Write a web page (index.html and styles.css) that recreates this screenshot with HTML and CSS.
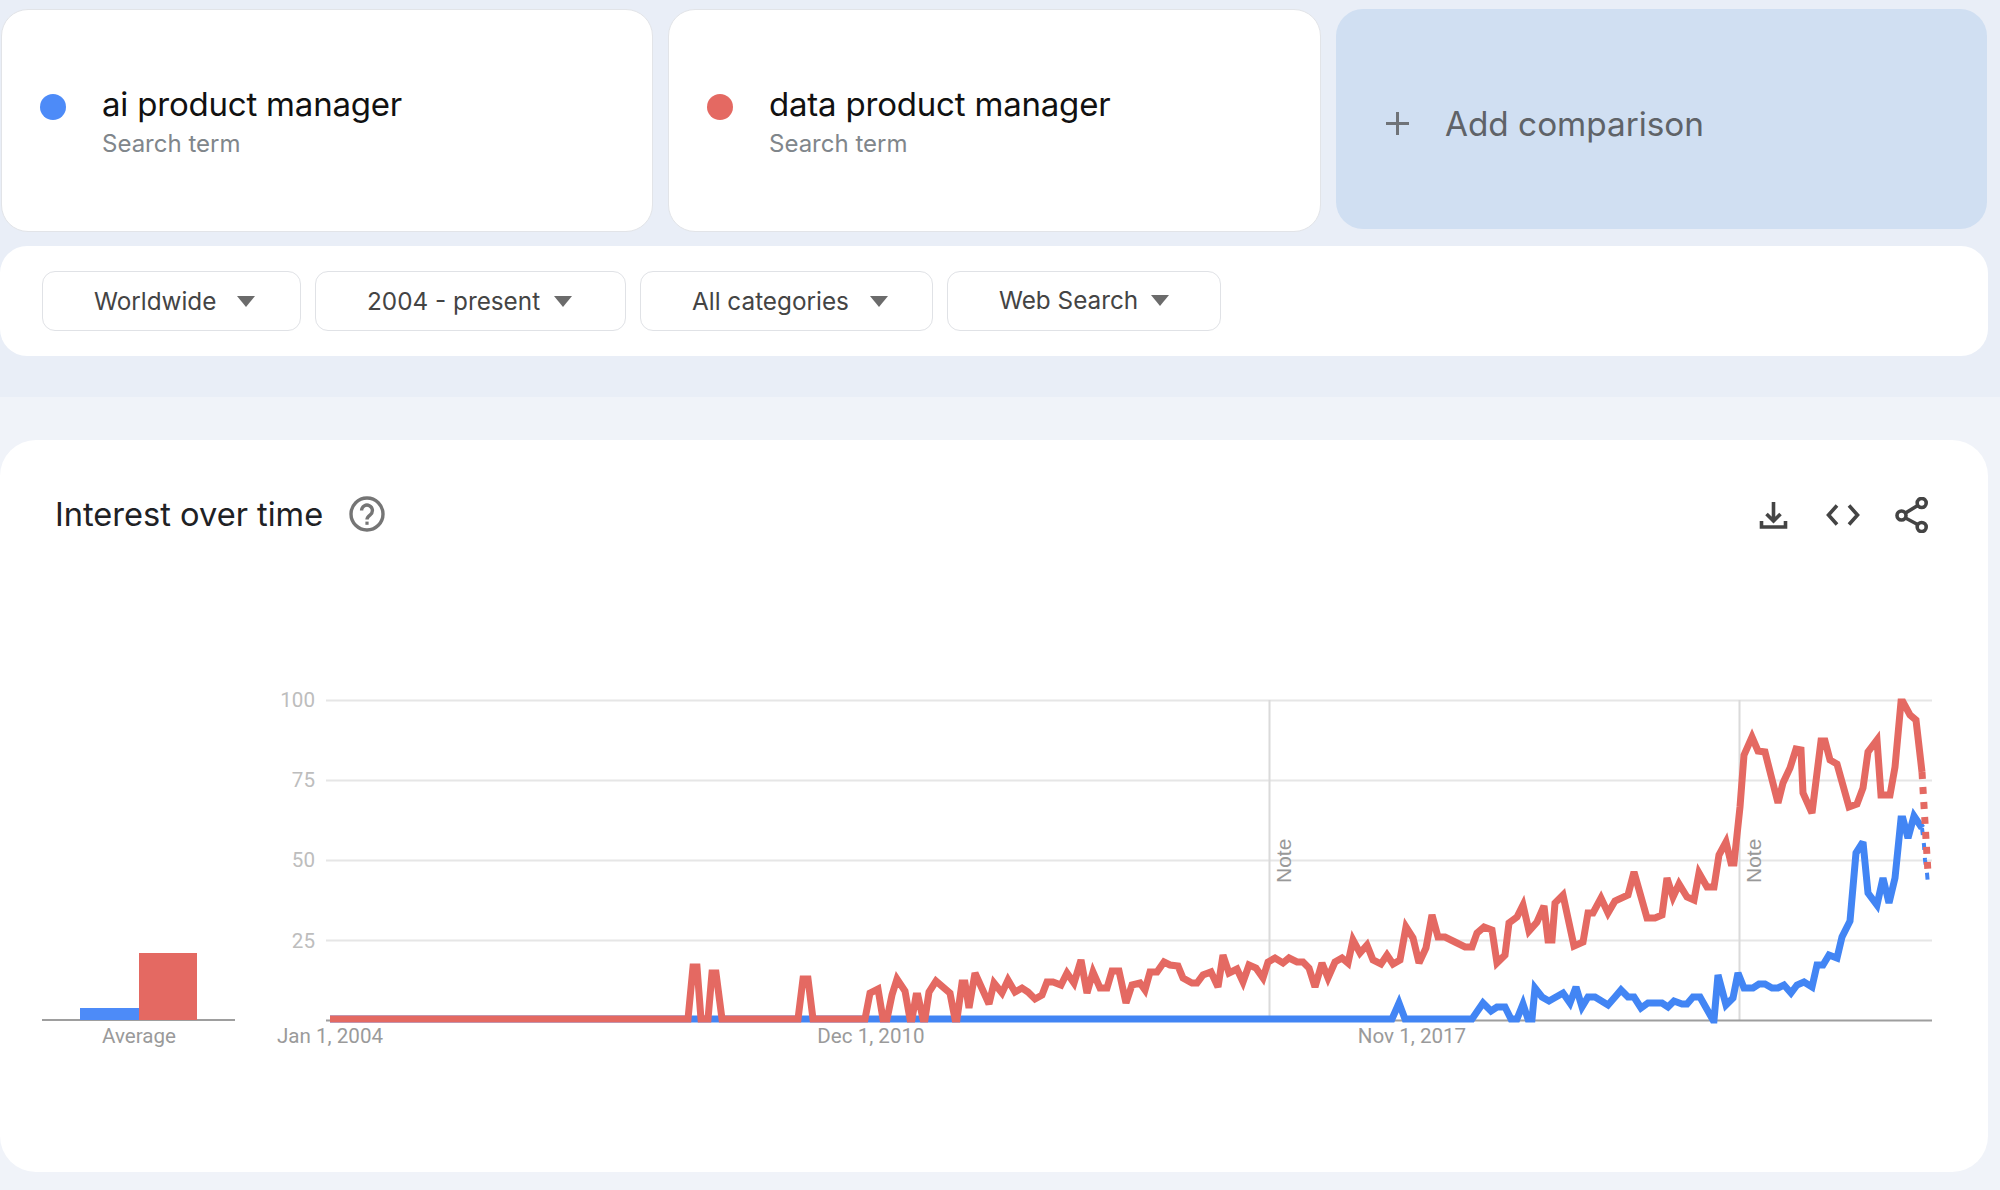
FILE: index.html
```html
<!DOCTYPE html>
<html lang="en">
<head>
<meta charset="utf-8">
<title>Google Trends - ai product manager vs data product manager</title>
<link rel="stylesheet" href="styles.css">
</head>
<body>
<header class="top">
  <div class="terms">
    <div class="term">
      <span class="dot dot-blue"></span>
      <div class="term-text">
        <div class="term-name">ai product manager</div>
        <div class="term-sub">Search term</div>
      </div>
    </div>
    <div class="term">
      <span class="dot dot-red"></span>
      <div class="term-text">
        <div class="term-name">data product manager</div>
        <div class="term-sub">Search term</div>
      </div>
    </div>
    <div class="add">
      <svg class="plus" viewBox="0 0 25 25" aria-hidden="true"><path d="M12.5 1v23M1 12.5h23"/></svg>
      <span class="add-label">Add comparison</span>
    </div>
  </div>
  <div class="filters">
    <div class="pill pill-geo"><span>Worldwide</span><i class="caret"></i></div>
    <div class="pill pill-time"><span>2004 - present</span><i class="caret"></i></div>
    <div class="pill pill-cat"><span>All categories</span><i class="caret"></i></div>
    <div class="pill pill-web"><span>Web Search</span><i class="caret"></i></div>
  </div>
</header>
<main class="main">
  <section class="card">
    <div class="card-head">
      <h2 class="card-title">Interest over time</h2>
      <svg class="help" viewBox="0 0 36 36" aria-hidden="true">
        <circle cx="18" cy="18" r="16"/>
        <path d="M12.6 14.4a5.4 5.4 0 1 1 8.6 4.4c-2 1.5-3.200 2.400-3.200 4.600"/>
        <path class="help-dot" d="M16.400 25.600h3.200v3.200h-3.200z"/>
      </svg>
      <div class="actions">
        <svg class="act" viewBox="0 0 36 36" aria-hidden="true"><path d="M18.500 5v19M11.500 17l7 7 7-7M6.500 24v6h24v-6"/></svg>
        <svg class="act" viewBox="0 0 36 36" aria-hidden="true"><path d="M12 8.500 3.500 18l8.500 9.500M24 8.500l8.500 9.500-8.500 9.500"/></svg>
        <svg class="act" viewBox="0 0 36 36" aria-hidden="true"><circle cx="6.500" cy="18.500" r="4.500"/><circle cx="26.700" cy="6" r="4.500"/><circle cx="26.700" cy="30" r="4.500"/><path d="M10.500 16 22.700 8.500M10.500 21l12.200 6.500"/></svg>
      </div>
    </div>
    <svg class="chart" viewBox="0 590 1988 582" role="img" aria-label="Interest over time chart">
      <g class="grid">
        <path d="M326 700.500H1932M326 780.500H1932M326 860.500H1932M326 940.500H1932"/>
      </g>
      <path class="note-line" d="M1269.500 700V1020M1739.500 700V1020"/>
      <path class="axis" d="M326 1020.500H1932M42 1020H235"/>
      <text class="ylab" x="315" y="707">100</text>
      <text class="ylab" x="315" y="787">75</text>
      <text class="ylab" x="315" y="867">50</text>
      <text class="ylab" x="315" y="948">25</text>
      <text class="note" transform="translate(1291 883) rotate(-90)">Note</text>
      <text class="note" transform="translate(1761 883) rotate(-90)">Note</text>
      <rect class="bar-blue" x="80" y="1008" width="59" height="12"/>
      <rect class="bar-red" x="139" y="953" width="58" height="67"/>
      <text class="xlab" x="139" y="1043">Average</text>
      <text class="xlab" x="330" y="1043">Jan 1, 2004</text>
      <text class="xlab" x="871" y="1043">Dec 1, 2010</text>
      <text class="xlab" x="1412" y="1043">Nov 1, 2017</text>
      <polyline class="line line-blue" points="330,1019 1392,1019 1399,1003 1405,1019 1472,1019 1483,1003 1491,1011 1497,1007 1505,1007 1511,1019 1517,1019 1523,1004 1528,1019 1532,1019 1535,988 1542,997 1549,1001 1563,993 1570,1003 1576,987 1582,1007 1588,997 1595,997 1608,1005 1615,997 1621,990 1628,997 1634,997 1641,1008 1648,1003 1662,1003 1668,1007 1674,1001 1682,1004 1687,1004 1693,997 1700,997 1713,1020 1714,1020 1718,975 1726,1005 1733,998 1738,973 1744,988 1753,988 1759,984 1765,984 1772,988 1778,988 1784,985 1791,993 1797,985 1804,982 1812,987 1817,965 1823,965 1829,955 1837,958 1842,937 1850,921 1856,853 1863,842 1868,893 1877,905 1883,878 1889,903 1895,878 1901,819 1903,819 1908,838 1914,816 1922,828"/>
      <polyline class="line line-blue dash dash-thin" points="1922,828 1924,845 1925,860 1927,873 1928,885"/>
      <polyline class="line line-red" points="330,1019 688,1019 693,967 697,967 701,1019 708,1019 712,973 716,973 722,1019 798,1019 803,979 808,979 813,1019 865,1019 870,993 878,989 883,1019 887,1019 892,995 897,979 905,991 910,1019 912,1019 916,996 918,996 923,1019 925,1019 929,992 936,981 950,993 955,1019 957,1019 962,983 965,983 969,1008 975,973 989,1004 994,983 1002,993 1008,980 1015,992 1022,988 1028,992 1035,999 1042,995 1047,982 1053,982 1061,985 1067,973 1074,983 1081,960 1087,993 1093,972 1100,988 1107,988 1112,971 1119,971 1126,1003 1132,985 1140,983 1145,990 1150,972 1157,972 1164,962 1170,965 1178,966 1183,978 1192,983 1197,983 1203,975 1211,972 1218,987 1223,955 1229,973 1237,969 1243,982 1249,965 1256,968 1263,978 1268,962 1275,958 1283,963 1289,958 1297,962 1303,962 1309,968 1315,987 1322,963 1328,978 1335,962 1342,958 1348,963 1353,940 1360,953 1367,945 1373,960 1381,964 1387,955 1393,964 1400,960 1406,927 1413,938 1419,963 1426,948 1432,915 1438,937 1445,937 1455,942 1465,947 1472,947 1477,933 1484,927 1492,930 1497,963 1505,955 1509,923 1517,917 1523,905 1529,931 1537,922 1544,906 1548,940 1552,940 1555,903 1563,895 1574,946 1583,942 1588,913 1593,913 1601,898 1608,913 1615,901 1628,895 1634,872 1647,918 1655,918 1662,915 1667,878 1673,897 1679,884 1687,897 1694,900 1699,873 1707,887 1714,887 1719,855 1726,842 1731,863 1734,863 1740,807 1744,755 1752,737 1758,751 1765,752 1778,803 1783,783 1790,768 1796,749 1801,750 1803,793 1812,813 1821,741 1825,741 1830,760 1837,764 1849,807 1857,804 1863,788 1868,752 1877,740 1881,795 1890,795 1895,767 1901,702 1903,702 1910,715 1916,720 1922,772"/>
      <polyline class="line line-red dash" points="1922,772 1928,873"/>
    </svg>
  </section>
</main>
</body>
</html>
```

FILE: styles.css
```css
* { box-sizing: border-box; }

html, body { margin: 0; padding: 0; }

body {
  width: 2000px;
  height: 1190px;
  overflow: hidden;
  background: #f0f3f9;
  font-family: Inter, "Liberation Sans", sans-serif;
}

.top {
  height: 397px;
  background: #e9eef7;
  padding: 9px 12px 0 0;
}

.terms {
  display: grid;
  grid-template-columns: 652px 653px 651px;
  column-gap: 15px;
  margin-left: 1px;
  height: 222px;
  align-items: start;
}

.term {
  height: 223px;
  display: flex;
  align-items: flex-start;
  padding: 74px 0 0 38px;
  background: #fff;
  border: 1px solid #e2e4e8;
  border-radius: 27px;
}

.dot {
  width: 26px;
  height: 26px;
  border-radius: 50%;
  margin-top: 10px;
  flex: none;
}
.dot-blue { background: #4d8bf8; }
.dot-red { background: #e46962; }

.term-text { margin-left: 36px; }

.term-name {
  font-size: 33px;
  line-height: 40px;
  color: #111;
  letter-spacing: -0.2px;
}

.term-sub {
  font-size: 24px;
  line-height: 40px;
  color: #80868b;
}

.add {
  height: 220px;
  display: flex;
  align-items: center;
  padding: 9px 0 0 49px;
  background: #d0dff2;
  border-radius: 27px;
}

.plus {
  width: 25px;
  height: 25px;
  fill: none;
  stroke: #6f7378;
  stroke-width: 3;
  flex: none;
}

.add-label {
  margin-left: 35px;
  font-size: 33.3px;
  color: #5f6368;
}

.filters {
  margin-top: 15px;
  width: 1988px;
  height: 110px;
  display: flex;
  align-items: center;
  gap: 14px;
  padding: 0 0 0 42px;
  background: #fff;
  border-radius: 27px;
}

.pill {
  height: 60px;
  display: flex;
  align-items: center;
  padding-left: 51px;
  border: 1px solid #e0e2e6;
  border-radius: 13px;
  font-size: 24.3px;
  color: #444;
  flex: none;
}

.pill-geo { width: 259px; }
.pill-time { width: 311px; }
.pill-cat { width: 293px; }
.pill-web { width: 274px; padding-bottom: 2px; }

.caret {
  width: 0;
  height: 0;
  margin-left: 21px;
  border-left: 9px solid transparent;
  border-right: 9px solid transparent;
  border-top: 11px solid #6b6b6b;
}

.pill-time .caret { margin-left: 14px; }
.pill-web .caret { margin-left: 13px; }

.main { padding: 43px 12px 0 0; }

.card {
  width: 1988px;
  height: 732px;
  background: #fff;
  border-radius: 36px;
}

.card-head {
  height: 148px;
  margin-bottom: 2px;
  display: flex;
  align-items: center;
  padding: 0 57px 0 55px;
}

.card-title {
  margin: 0;
  font-size: 32.6px;
  font-weight: 400;
  color: #202124;
}

.help {
  width: 36px;
  height: 36px;
  margin: 0 0 1px 26px;
  fill: none;
  stroke: #757575;
  stroke-width: 3.4;
}
.help-dot { fill: #757575; stroke: none; }

.actions {
  margin-left: auto;
  display: flex;
  gap: 34px;
  padding-top: 2px;
}

.act {
  width: 36px;
  height: 36px;
  fill: none;
  stroke: #444;
  stroke-width: 3.6;
}

.chart {
  display: block;
  width: 1988px;
  height: 582px;
}

.grid path { stroke: #e6e6e6; stroke-width: 2; fill: none; }
.note-line { stroke: #dadada; stroke-width: 2; fill: none; }
.axis { stroke: #9e9e9e; stroke-width: 2; fill: none; }

.ylab, .xlab { font-family: Roboto, "Liberation Sans", sans-serif; font-size: 20.6px; }
.ylab { fill: #bdbdbd; text-anchor: end; }
.xlab { fill: #9a9a9a; text-anchor: middle; }
.note { fill: #999; font-family: "Liberation Sans", sans-serif; font-size: 21px; }

.bar-blue { fill: #4d8bf8; }
.bar-red { fill: #e46962; }

.line {
  fill: none;
  stroke-width: 7;
  stroke-linejoin: miter;
  stroke-miterlimit: 3;
}
.line-blue { stroke: #4285f4; }
.line-red { stroke: #e46962; }
.dash { stroke-dasharray: 7 8; }
.dash-thin { stroke-width: 4; }
```
